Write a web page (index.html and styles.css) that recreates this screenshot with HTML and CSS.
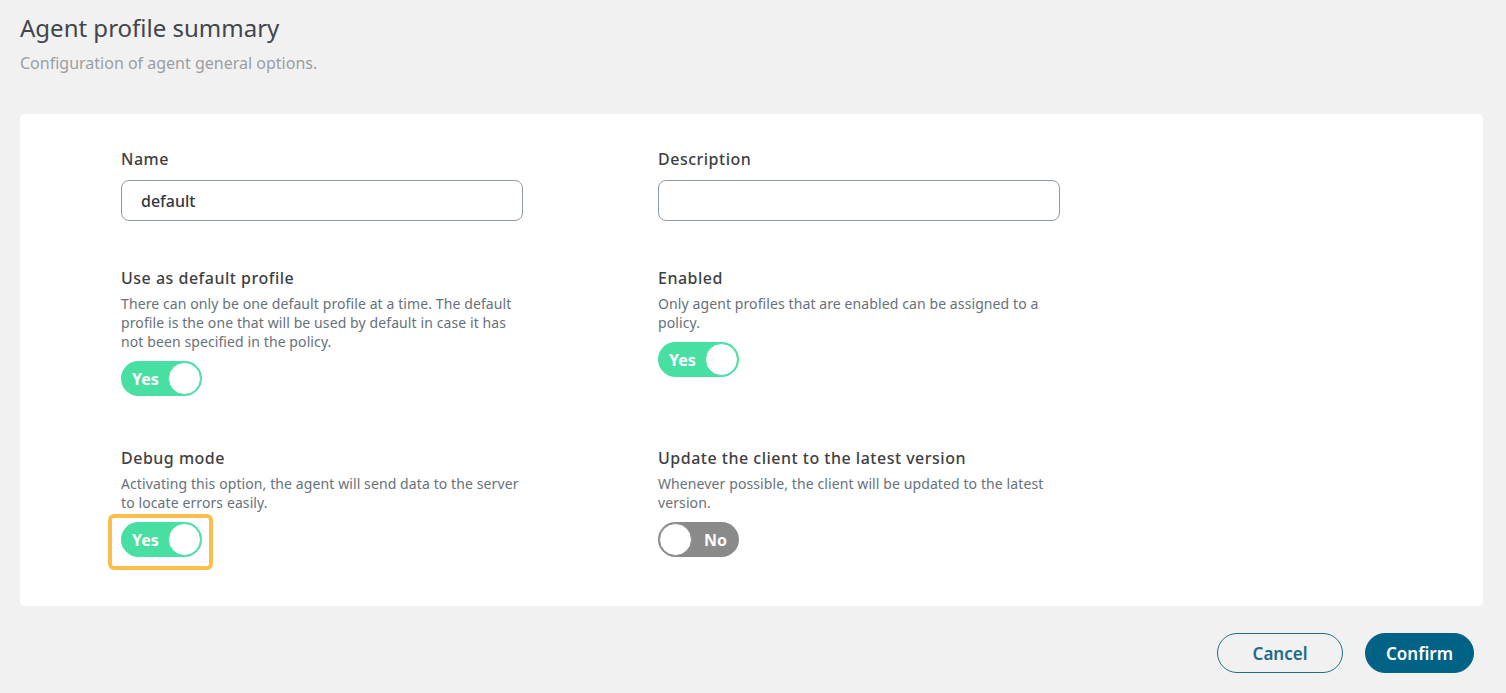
FILE: index.html
```html
<!DOCTYPE html>
<html lang="en">
<head>
<meta charset="utf-8">
<title>Agent profile summary</title>
<link rel="stylesheet" href="styles.css">
</head>
<body>
<div class="page">
  <header class="head">
    <h1 class="title">Agent profile summary</h1>
    <p class="subtitle">Configuration of agent general options.</p>
  </header>

  <section class="card">
    <div class="grid">
      <div class="field">
        <label class="label">Name</label>
        <div class="input">default</div>
      </div>
      <div class="field">
        <label class="label">Description</label>
        <div class="input"></div>
      </div>

      <div class="field">
        <div class="label">Use as default profile</div>
        <p class="desc">There can only be one default profile at a time. The default profile is the one that will be used by default in case it has not been specified in the policy.</p>
        <div class="toggle on"><span class="toggle-text">Yes</span><span class="knob"></span></div>
      </div>
      <div class="field">
        <div class="label">Enabled</div>
        <p class="desc">Only agent profiles that are enabled can be assigned to a policy.</p>
        <div class="toggle on"><span class="toggle-text">Yes</span><span class="knob"></span></div>
      </div>

      <div class="field">
        <div class="label">Debug mode</div>
        <p class="desc">Activating this option, the agent will send data to the server to locate errors easily.</p>
        <div class="highlight-wrap">
          <div class="toggle on"><span class="toggle-text">Yes</span><span class="knob"></span></div>
          <span class="highlight"></span>
        </div>
      </div>
      <div class="field">
        <div class="label">Update the client to the latest version</div>
        <p class="desc">Whenever possible, the client will be updated to the latest version.</p>
        <div class="toggle off"><span class="knob"></span><span class="toggle-text">No</span></div>
      </div>
    </div>
  </section>

  <div class="actions">
    <button class="btn btn-outline">Cancel</button>
    <button class="btn btn-primary">Confirm</button>
  </div>
</div>
</body>
</html>
```

FILE: styles.css
```css
* { box-sizing: border-box; }

html, body {
  margin: 0;
  padding: 0;
  background: #f1f1f1;
  font-family: "Noto Sans", "Open Sans", sans-serif;
  color: #3d3f44;
}

.page {
  padding: 0 23px 0 20px;
}

.head {
  padding-top: 12px;
  height: 114px;
}

.title {
  margin: 0;
  font-size: 24px;
  line-height: 32px;
  font-weight: 400;
  color: #41454c;
}

.subtitle {
  margin: 9px 0 0;
  font-size: 16px;
  line-height: 20px;
  color: #9a9ea4;
}

.card {
  background: #ffffff;
  border-radius: 5px;
  padding: 33px 101px 44px;
}

.grid {
  display: grid;
  grid-template-columns: 402px 402px;
  column-gap: 135px;
  row-gap: 45px;
  align-items: start;
}

.field {
  display: flex;
  flex-direction: column;
  align-items: flex-start;
}

.label {
  font-size: 16px;
  line-height: 24px;
  font-weight: 500;
  letter-spacing: 0.5px;
  color: #3e3f42;
  white-space: nowrap;
}

.input {
  margin-top: 9px;
  width: 402px;
  height: 41px;
  border: 1px solid #8f9ba3;
  border-radius: 8px;
  padding: 0 19px;
  display: flex;
  align-items: center;
  font-size: 16px;
  font-weight: 500;
  color: #343741;
}

.desc {
  margin: 4px 0 0;
  font-size: 14px;
  line-height: 19px;
  letter-spacing: 0.1px;
  color: #67717a;
  max-width: 402px;
}

.toggle {
  margin-top: 10px;
  margin-bottom: 5px;
  width: 81px;
  height: 35px;
  border-radius: 18px;
  display: flex;
  align-items: center;
  justify-content: space-between;
  padding: 0 1px 0 11px;
}

.toggle.on {
  background: #48dfa2;
}

.toggle.off {
  background: #8a8a8a;
  padding: 0 12px 0 1px;
}

.toggle-text {
  font-size: 16px;
  font-weight: 700;
  color: #ffffff;
}

.knob {
  width: 33px;
  height: 33px;
  border-radius: 50%;
  background: #ffffff;
}

.toggle.on .knob { border: 1px solid #48dfa2; }
.toggle.off .knob { border: 1px solid #8a8a8a; }

.highlight-wrap {
  position: relative;
}

.highlight {
  position: absolute;
  left: -13px;
  top: 2px;
  right: -11px;
  bottom: -8px;
  border: 4px solid #fbbd4b;
  border-radius: 6px;
  pointer-events: none;
}

.actions {
  display: flex;
  justify-content: flex-end;
  gap: 22px;
  margin-top: 27px;
  padding-right: 9px;
}

.btn {
  height: 40px;
  border-radius: 20px;
  font-family: inherit;
  font-size: 17px;
  font-weight: 600;
  cursor: pointer;
}

.btn-outline {
  width: 126px;
  background: transparent;
  border: 1px solid #1e6d8c;
  color: #1e6a88;
}

.btn-primary {
  width: 109px;
  background: #006385;
  border: 1px solid #006385;
  color: #ffffff;
}
```
